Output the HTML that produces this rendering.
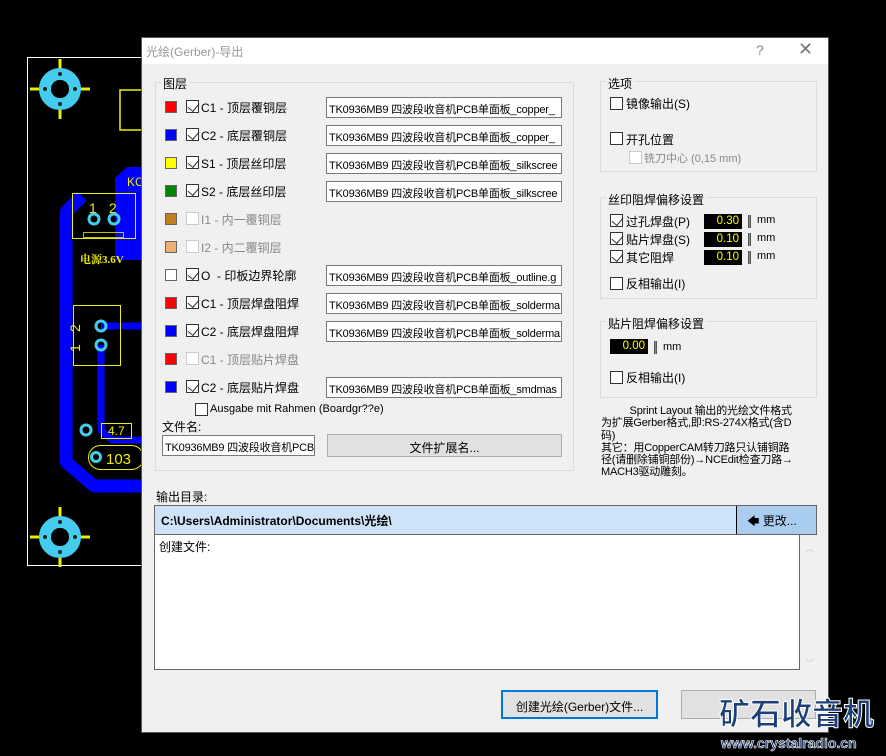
<!DOCTYPE html>
<html><head><meta charset="utf-8"><style>
*{margin:0;padding:0;box-sizing:border-box}
body{width:886px;height:756px;background:#000;position:relative;overflow:hidden;font-family:"Liberation Sans","Noto Sans CJK SC",sans-serif;font-size:12px;color:#000}
.a{position:absolute}
.dlg{left:141px;top:37px;width:688px;height:696px;background:#f0f0f0;border:1px solid #555}
.title{left:0;top:0;width:686px;height:26px;background:#fff;color:#999;font-size:12px;padding:5px 0 0 4px}
.grp{border:1px solid #dcdcdc}
.gl{background:#f0f0f0;padding:0 2px;font-size:12px}
.sq{width:12px;height:12px;border:1px solid #666}
.cb{width:13px;height:13px;border:1px solid #333;background:#fff}
.cb.d{border-color:#ccc}
.cb.c::after{content:"";position:absolute;left:2px;top:0px;width:6px;height:9px;border:solid #333;border-width:0 1.3px 1.3px 0;transform:translate(1px,0) rotate(40deg)}
.lbl{font-size:12px;white-space:nowrap}
.tb{background:#fff;border:1px solid #7a7a7a;height:21px;font-size:11px;padding:3px 2px;white-space:nowrap;overflow:hidden;letter-spacing:-0.2px}
.num{background:#000;color:#ff0;font-size:11.5px;text-align:right;padding:1px 3px;height:15px;width:38px}
.sp{width:3px;height:13px;background:linear-gradient(90deg,#333,#999,#333)}
.btn{background:#e1e1e1;border:1px solid #adadad;text-align:center;font-size:12px}
</style></head><body>
<svg class="a" style="left:0;top:0" width="150" height="600">
<rect x="27.5" y="57.5" width="130" height="508" fill="none" stroke="#fff"/>
<path d="M120 90 h30 v40 h-30z" fill="none" stroke="#ee0" stroke-width="1.5"/>
<path d="M127 167 L142 167 L142 260 L115 260 L115 178Z" fill="#00f"/>
<path d="M82 196 L66 212 L66 462 L94 486 L142 486" stroke="#00f" stroke-width="13" fill="none" stroke-linejoin="bevel"/>
<path d="M101 326 H142" stroke="#00f" stroke-width="7" fill="none"/>
<path d="M101 345 V430 L112 440 H142" stroke="#00f" stroke-width="7" fill="none"/>
<rect x="72.5" y="193.5" width="63" height="45" fill="none" stroke="#ee0"/>
<rect x="83.5" y="232.5" width="40" height="5" fill="none" stroke="#ee0" stroke-width="0.8"/>
<rect x="73.5" y="305.5" width="47" height="60" fill="none" stroke="#ee0"/>
<text x="89" y="213" fill="#ee0" font-size="14" font-family="Liberation Sans">1</text>
<text x="109" y="213" fill="#ee0" font-size="14" font-family="Liberation Sans">2</text>
<circle cx="94" cy="219" r="5" fill="none" stroke="#4ce" stroke-width="3"/>
<circle cx="114" cy="219" r="5" fill="none" stroke="#4ce" stroke-width="3"/>
<text x="80" y="263" fill="#ee0" font-size="11" font-weight="bold" font-family="Liberation Serif,Noto Serif CJK SC,serif">电源3.6V</text>
<text x="127" y="186" fill="#ee0" font-size="12" font-family="Liberation Sans">KC</text>
<text transform="translate(80,332) rotate(-90)" fill="#ee0" font-size="14">2</text>
<text transform="translate(80,352) rotate(-90)" fill="#ee0" font-size="14">1</text>
<circle cx="101" cy="326" r="5" fill="none" stroke="#4ce" stroke-width="3"/>
<circle cx="101" cy="345" r="5" fill="none" stroke="#4ce" stroke-width="3"/>
<circle cx="86" cy="430" r="5" fill="none" stroke="#4ce" stroke-width="3"/>
<rect x="101.5" y="423.5" width="30" height="15" fill="none" stroke="#ee0"/>
<text x="108" y="435" fill="#ee0" font-size="12">4.7</text>
<rect x="88.5" y="445.5" width="55" height="24" rx="12" fill="none" stroke="#ee0"/>
<circle cx="96" cy="457" r="4.5" fill="none" stroke="#4ce" stroke-width="3"/>
<text x="106" y="464" fill="#ee0" font-size="15">103</text>
<g stroke="#ee0" stroke-width="3"><path d="M60 59v60M30 89h60M60 507v60M30 537h60"/></g>
<circle cx="60" cy="89" r="15" fill="none" stroke="#4ce" stroke-width="12"/>
<circle cx="60" cy="537" r="15" fill="none" stroke="#4ce" stroke-width="12"/>
<circle cx="60" cy="89" r="9" fill="#000"/>
<circle cx="60" cy="537" r="9" fill="#000"/>
<g fill="#222"><circle cx="60" cy="74" r="2"/><circle cx="60" cy="104" r="2"/><circle cx="45" cy="89" r="2"/><circle cx="75" cy="89" r="2"/><circle cx="60" cy="522" r="2"/><circle cx="60" cy="552" r="2"/><circle cx="45" cy="537" r="2"/><circle cx="75" cy="537" r="2"/></g>
</svg>
<div class="a dlg">
<div class="a title">光绘(Gerber)-导出</div>
<div class="a" style="left:614px;top:4px;color:#888;font-size:14px">?</div>
<div class="a" style="left:656px;top:1px;color:#777;font-size:18px">✕</div>
<div class="a grp" style="left:13px;top:44px;width:419px;height:389px"></div>
<div class="a gl" style="left:19px;top:37px">图层</div>
</div>
<div class="a sq" style="left:165px;top:101px;background:#f00"></div><div class="a cb c" style="left:186px;top:100px"></div><div class="a lbl" style="left:201px;top:99px">C1 - 顶层覆铜层</div><div class="a tb" style="left:326px;top:97px;width:236px">TK0936MB9 四波段收音机PCB单面板_copper_</div>
<div class="a sq" style="left:165px;top:129px;background:#00f"></div><div class="a cb c" style="left:186px;top:128px"></div><div class="a lbl" style="left:201px;top:127px">C2 - 底层覆铜层</div><div class="a tb" style="left:326px;top:125px;width:236px">TK0936MB9 四波段收音机PCB单面板_copper_</div>
<div class="a sq" style="left:165px;top:157px;background:#ff0"></div><div class="a cb c" style="left:186px;top:156px"></div><div class="a lbl" style="left:201px;top:155px">S1 - 顶层丝印层</div><div class="a tb" style="left:326px;top:153px;width:236px">TK0936MB9 四波段收音机PCB单面板_silkscree</div>
<div class="a sq" style="left:165px;top:185px;background:#080"></div><div class="a cb c" style="left:186px;top:184px"></div><div class="a lbl" style="left:201px;top:183px">S2 - 底层丝印层</div><div class="a tb" style="left:326px;top:181px;width:236px">TK0936MB9 四波段收音机PCB单面板_silkscree</div>
<div class="a sq" style="left:165px;top:213px;background:#c08020"></div><div class="a cb d" style="left:186px;top:212px"></div><div class="a lbl" style="left:201px;top:211px;color:#888">I1 - 内一覆铜层</div>
<div class="a sq" style="left:165px;top:241px;background:#f0b070"></div><div class="a cb d" style="left:186px;top:240px"></div><div class="a lbl" style="left:201px;top:239px;color:#888">I2 - 内二覆铜层</div>
<div class="a sq" style="left:165px;top:269px;background:#fff"></div><div class="a cb c" style="left:186px;top:268px"></div><div class="a lbl" style="left:201px;top:267px">O&nbsp; - 印板边界轮廓</div><div class="a tb" style="left:326px;top:265px;width:236px">TK0936MB9 四波段收音机PCB单面板_outline.g</div>
<div class="a sq" style="left:165px;top:297px;background:#f00"></div><div class="a cb c" style="left:186px;top:296px"></div><div class="a lbl" style="left:201px;top:295px">C1 - 顶层焊盘阻焊</div><div class="a tb" style="left:326px;top:293px;width:236px">TK0936MB9 四波段收音机PCB单面板_solderma</div>
<div class="a sq" style="left:165px;top:325px;background:#00f"></div><div class="a cb c" style="left:186px;top:324px"></div><div class="a lbl" style="left:201px;top:323px">C2 - 底层焊盘阻焊</div><div class="a tb" style="left:326px;top:321px;width:236px">TK0936MB9 四波段收音机PCB单面板_solderma</div>
<div class="a sq" style="left:165px;top:353px;background:#f00"></div><div class="a cb d" style="left:186px;top:352px"></div><div class="a lbl" style="left:201px;top:351px;color:#888">C1 - 顶层贴片焊盘</div>
<div class="a sq" style="left:165px;top:381px;background:#00f"></div><div class="a cb c" style="left:186px;top:380px"></div><div class="a lbl" style="left:201px;top:379px">C2 - 底层贴片焊盘</div><div class="a tb" style="left:326px;top:377px;width:236px">TK0936MB9 四波段收音机PCB单面板_smdmas</div>
<div class="a cb" style="left:195px;top:403px"></div><div class="a lbl" style="left:210px;top:403px;font-size:11px">Ausgabe mit Rahmen (Boardgr??e)</div>
<div class="a lbl" style="left:162px;top:418px">文件名:</div>
<div class="a tb" style="left:162px;top:435px;width:153px">TK0936MB9 四波段收音机PCB</div>
<div class="a btn" style="left:327px;top:434px;width:235px;height:23px;padding-top:4px">文件扩展名...</div>
<div class="a grp" style="left:600px;top:81px;width:217px;height:91px"></div>
<div class="a gl" style="left:606px;top:75px">选项</div>
<div class="a cb" style="left:610px;top:97px"></div><div class="a lbl" style="left:626px;top:95px">镜像输出(S)</div>
<div class="a cb" style="left:610px;top:132px"></div><div class="a lbl" style="left:626px;top:131px">开孔位置</div>
<div class="a cb d" style="left:629px;top:151px"></div><div class="a lbl" style="left:644px;top:150px;color:#888;font-size:11px">铣刀中心 (0,15 mm)</div>
<div class="a grp" style="left:600px;top:197px;width:217px;height:102px"></div>
<div class="a gl" style="left:606px;top:191px">丝印阻焊偏移设置</div>
<div class="a cb c" style="left:610px;top:214px"></div><div class="a lbl" style="left:626px;top:213px">过孔焊盘(P)</div>
<div class="a cb c" style="left:610px;top:232px"></div><div class="a lbl" style="left:626px;top:231px">贴片焊盘(S)</div>
<div class="a cb c" style="left:610px;top:250px"></div><div class="a lbl" style="left:626px;top:249px">其它阻焊</div>
<div class="a num" style="left:704px;top:214px">0.30</div><div class="a sp" style="left:748px;top:215px"></div><div class="a lbl" style="left:757px;top:214px;font-size:11px">mm</div>
<div class="a num" style="left:704px;top:232px">0.10</div><div class="a sp" style="left:748px;top:233px"></div><div class="a lbl" style="left:757px;top:232px;font-size:11px">mm</div>
<div class="a num" style="left:704px;top:250px">0.10</div><div class="a sp" style="left:748px;top:251px"></div><div class="a lbl" style="left:757px;top:250px;font-size:11px">mm</div>
<div class="a cb" style="left:610px;top:277px"></div><div class="a lbl" style="left:626px;top:275px">反相输出(I)</div>
<div class="a grp" style="left:600px;top:321px;width:217px;height:77px"></div>
<div class="a gl" style="left:606px;top:315px">贴片阻焊偏移设置</div>
<div class="a num" style="left:610px;top:339px">0.00</div><div class="a sp" style="left:654px;top:341px"></div><div class="a lbl" style="left:663px;top:341px;font-size:11px">mm</div>
<div class="a cb" style="left:610px;top:371px"></div><div class="a lbl" style="left:626px;top:369px">反相输出(I)</div>
<div class="a" style="left:601px;top:405px;font-size:11px;line-height:12.3px;white-space:nowrap;letter-spacing:-0.2px">&nbsp;&nbsp;&nbsp;&nbsp;&nbsp;&nbsp;&nbsp;&nbsp;&nbsp;&nbsp;Sprint Layout 输出的光绘文件格式<br>为扩展Gerber格式,即:RS-274X格式(含D<br>码)<br>其它：用CopperCAM转刀路只认铺铜路<br>径(请删除铺铜部份)→NCEdit检查刀路→<br>MACH3驱动雕刻。</div>
<div class="a lbl" style="left:156px;top:488px">输出目录:</div>
<div class="a" style="left:154px;top:505px;width:663px;height:30px;background:#cfe3f8;border:1px solid #666"></div>
<div class="a lbl" style="left:161px;top:512px;font-weight:bold">C:\Users\Administrator\Documents\光绘\</div>
<div class="a" style="left:736px;top:506px;width:80px;height:28px;background:#a8cdf0;border-left:1px solid #000;padding:6px 0 0 10px;font-size:12px">&#129092; 更改...</div>
<div class="a" style="left:154px;top:535px;width:646px;height:135px;background:#fff;border:1px solid #666;border-top:none;padding:3px 4px">创建文件:</div>
<div class="a" style="left:805px;top:540px;color:#ccc;font-size:10px">︿</div>
<div class="a" style="left:805px;top:655px;color:#ccc;font-size:10px">﹀</div>
<div class="a btn" style="left:501px;top:690px;width:157px;height:29px;border:2px solid #0078d7;padding-top:6px">创建光绘(Gerber)文件...</div>
<div class="a btn" style="left:681px;top:690px;width:135px;height:29px"></div>
<div class="a" style="left:719px;top:692px;font-size:31px;font-weight:bold;color:#1c3f78;white-space:nowrap;font-family:'Noto Sans CJK SC',sans-serif;line-height:40px;-webkit-text-stroke:1px #fff">矿石收音机</div>
<div class="a" style="left:721px;top:735px;font-size:14px;font-weight:bold;color:#1c3f78;white-space:nowrap;-webkit-text-stroke:0.6px #fff">www.crystalradio.cn</div>
</body></html>
